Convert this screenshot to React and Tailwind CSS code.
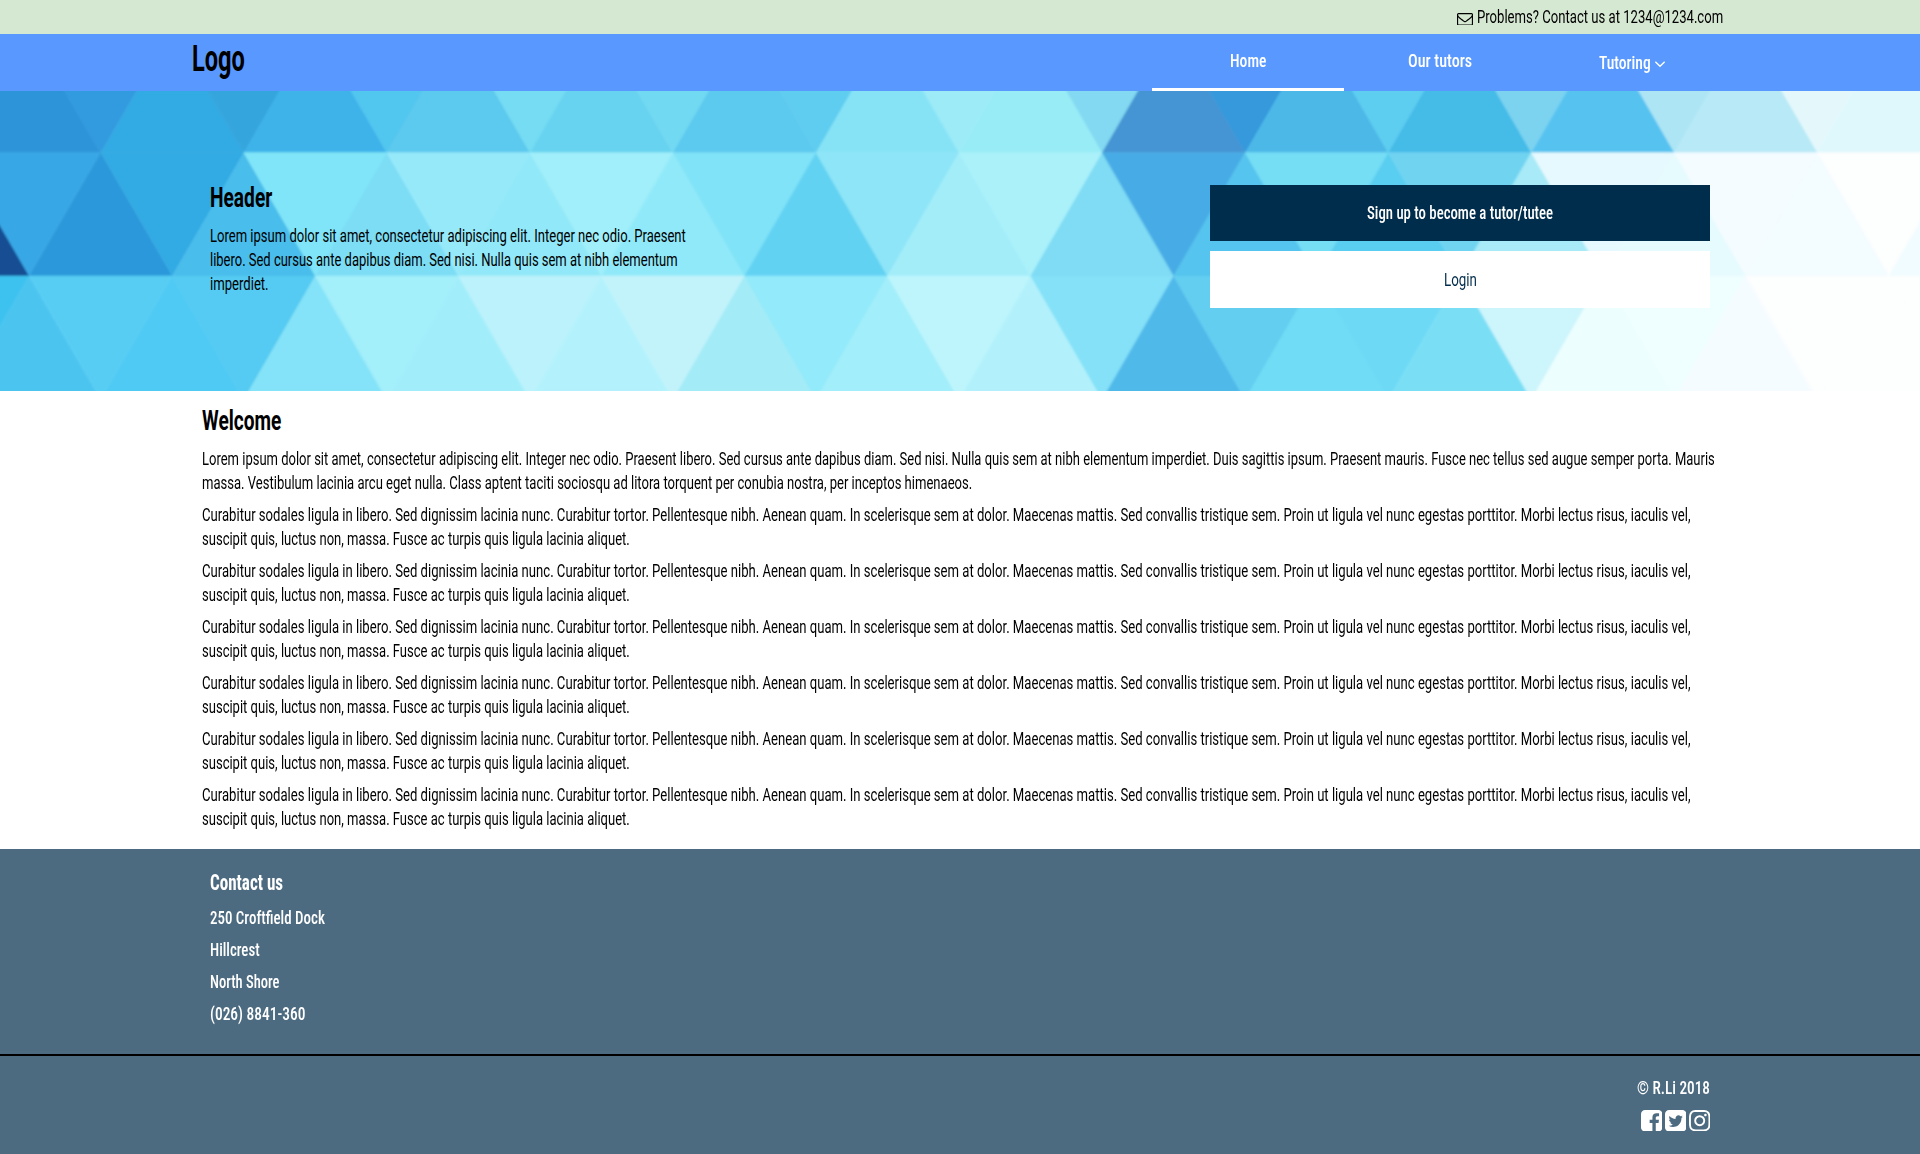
import { useLayoutEffect, useRef, useState } from "react";

// Text set condensed: a single line squeezed horizontally to the given width.
function Fit({ w, dy = 0, className = "", children }) {
  const ref = useRef(null);
  const [k, setK] = useState(0.7);
  useLayoutEffect(() => {
    setK(w / ref.current.offsetWidth);
  }, [w, children]);
  return (
    <span className="block" style={{ width: w }}>
      <span
        ref={ref}
        className={"inline-block origin-left whitespace-nowrap align-top " + className}
        style={{ transform: `translateY(${dy}px) scaleX(${k})` }}
      >
        {children}
      </span>
    </span>
  );
}

const BODY = "text-[18.6px] leading-6";
const STRONG = "text-[18.6px] font-medium leading-6 [font-stretch:75%]";

const ROW_A = [
  "#2f94d9", "#309adf", "#33aae3", "#35a5dd", "#3cb3ea", "#51c6ef", "#5cc9ee", "#74dcf3", "#68d3f0",
  "#72d9f2", "#5bc9ef", "#5fcdf0", "#86e3f6", "#9cebf7", "#98ecf6", "#82d9f1", "#4494d3", "#3499dc",
  "#4bb8e8", "#5dcef0", "#44bbe8", "#7bd3f0", "#57c2f0", "#ade5f5", "#b8e9f6", "#e4f8fc", "#dff8fc",
];
const ROW_B = [
  "#134e93", "#37a7e6", "#2c98da", "#33aae3", "#49bdeb", "#80e5f9", "#7bddf5", "#96e9f9", "#91e8f8",
  "#a0effa", "#90e9f9", "#80e3f7", "#62d2f3", "#8de5f7", "#a3edf9", "#aaf1fa", "#7fdcf4", "#47ace5",
  "#54c4ee", "#74def5", "#5acef0", "#70d4f1", "#a8eaf7", "#e6f9fe", "#e6fbfe", "#f4fcff", "#f3fcff",
  "#fdfefe", "#f0fcff",
];
const ROW_C = [
  "#3cc2f0", "#4bc4f0", "#58cdf3", "#4fcaf4", "#55caf2", "#84e3f8", "#a3effa", "#a1eefa", "#bcf2fb",
  "#b3f2fc", "#c2f3fa", "#a3ebf7", "#92eafa", "#a2eefa", "#bef5fc", "#b2f1fb", "#84e1f8", "#50b9ea",
  "#63cef0", "#70dcf5", "#6dd9f5", "#7adff5", "#cdf5fc", "#ecfefe", "#effeff", "#f5fcff", "#fdfefe",
  "#fdfefe", "#fdfefe",
];

const HALF = 71.53;

// One strip of alternating triangles; cx is the centre of the first one.
function Strip({ colors, cx, top, bottom, firstUp }) {
  return colors.map((c, i) => {
    const x = cx + i * HALF;
    const up = firstUp ? i % 2 === 0 : i % 2 === 1;
    const [apex, base] = up ? [top, bottom] : [bottom, top];
    return (
      <polygon
        key={i}
        points={`${x},${apex} ${x - HALF},${base} ${x + HALF},${base}`}
        fill={c}
        stroke={c}
        strokeWidth="0.6"
      />
    );
  });
}

function HeroPattern() {
  return (
    <svg className="absolute inset-0 h-full w-full" viewBox="0 0 1920 300" preserveAspectRatio="none">
      <filter id="soft" x="-5%" y="-20%" width="110%" height="140%">
        <feGaussianBlur stdDeviation="0.8" />
      </filter>
      <rect width="1920" height="300" fill="#fdfefe" />
      <g filter="url(#soft)">
        <Strip colors={ROW_A} cx={29.4} top={-61.6} bottom={61.7} firstUp />
        <Strip colors={ROW_B} cx={-42.2} top={61.7} bottom={185} firstUp />
        <Strip colors={ROW_C} cx={-42.2} top={185} bottom={308.6} firstUp={false} />
      </g>
    </svg>
  );
}

function Glyph({ d, box, className }) {
  return (
    <svg viewBox={box} className={className} fill="currentColor">
      <path d={d} />
    </svg>
  );
}

const ENVELOPE =
  "M1664 1504v-768q-32 36-69 66-268 206-426 338-51 43-83 67t-86.500 48.500-102.500 24.500h-2q-48 0-102.500-24.500t-86.500-48.500-83-67q-158-132-426-338-37-30-69-66v768q0 13 9.500 22.500t22.500 9.500h1472q13 0 22.500-9.500t9.500-22.500zm0-1051v-24.500l-.5-13-3-12.500-5.500-9-9-7.500-14-2.500h-1472q-13 0-22.500 9.500t-9.500 22.500q0 168 147 284 193 152 401 317 6 5 35 29.500t46 37.500 44.500 31.500 50.500 27.500 43 9h2q20 0 43-9t50.500-27.500 44.500-31.500 46-37.500 35-29.500q208-165 401-317 54-43 100.500-115.500t46.500-131.500zm128-37v1088q0 66-47 113t-113 47h-1472q-66 0-113-47t-47-113v-1088q0-66 47-113t113-47h1472q66 0 113 47t47 113z";
const ANGLE =
  "M1395 736q0 13-10 23l-466 466q-10 10-23 10t-23-10l-466-466q-10-10-10-23t10-23l50-50q10-10 23-10t23 10l393 393 393-393q10-10 23-10t23 10l50 50q10 10 10 23z";
const FACEBOOK =
  "M1376 128q119 0 203.500 84.500t84.500 203.500v960q0 119-84.500 203.500t-203.500 84.500h-188v-595h199l30-232h-229v-148q0-56 23.500-84t91.500-28l122-1v-207q-63-9-178-9-136 0-217.500 80t-81.500 226v171h-200v232h200v595h-532q-119 0-203.500-84.500t-84.500-203.500v-960q0-119 84.500-203.500t203.500-84.500h960z";
const TWITTER =
  "M1408 610q-56 25-121 34 68-40 93-117-65 38-134 51-61-66-153-66-87 0-148.500 61.500t-61.500 148.500q0 29 5 48-129-7-242-65t-192-155q-29 50-29 106 0 114 91 175-47-1-100-26v1q0 75 50 133.500t123 76.500q-29 8-51 8-13 0-39-4 21 63 74.500 104t121.500 42q-116 90-261 90-26 0-50-3 148 94 322 94 112 0 210-35.500t168-95 120.500-137 75-162 24.500-168.500q0-18-1-27 63-45 105-109zM1664 416v960q0 119-84.500 203.500t-203.500 84.500h-960q-119 0-203.500-84.500t-84.500-203.500v-960q0-119 84.500-203.500t203.500-84.500h960q119 0 203.500 84.500t84.500 203.500z";
const INSTAGRAM =
  "M1152 896q0-106-75-181t-181-75-181 75-75 181 75 181 181 75 181-75 75-181zm138 0q0 164-115 279t-279 115-279-115-115-279 115-279 279-115 279 115 115 279zm108-410q0 38-27 65t-65 27-65-27-27-65 27-65 65-27 65 27 27 65zm-502-220q-7 0-76.500-.5t-105.500 0-96.500 3-103 10-71.500 18.500q-50 20-88 58t-58 88q-11 29-18.500 71.500t-10 103-3 96.500 0 105.500.5 76.500-.5 76.500 0 105.500 3 96.500 10 103 18.500 71.500q20 50 58 88t88 58q29 11 71.500 18.500t103 10 96.500 3 105.500 0 76.500-.5 76.500.5 105.500 0 96.500-3 103-10 71.500-18.500q50-20 88-58t58-88q11-29 18.500-71.500t10-103 3-96.500 0-105.500-.5-76.500.5-76.500 0-105.500-3-96.500-10-103-18.500-71.500q-20-50-58-88t-88-58q-29-11-71.500-18.500t-103-10-96.500-3-105.500 0-76.500.5zm768 630q0 229-5 317-10 208-124 322t-322 124q-88 5-317 5t-317-5q-208-10-322-124t-124-322q-5-88-5-317t5-317q10-208 124-322t322-124q88-5 317-5t317 5q208 10 322 124t124 322q5 88 5 317z";

const REPEATS = [1, 2, 3, 4, 5, 6];

export default function App() {
  return (
    <div className="flex h-[1154px] flex-col overflow-hidden bg-white font-[Roboto,sans-serif] text-black">
      <div className="flex h-[34px] shrink-0 items-center justify-end bg-[#d5e8d2] pr-[197.5px]">
        <Glyph d={ENVELOPE} box="0 256 1792 1408" className="mr-[4px] mt-[4px] h-[12.6px] w-4" />
        <Fit w={246} className={BODY}>Problems? Contact us at 1234@1234.com</Fit>
      </div>

      <nav className="flex h-[57px] shrink-0 justify-between bg-[#5999ff] px-48">
        <Fit w={53} dy={1} className="text-[36.5px] font-bold leading-[48px]">Logo</Fit>
        <div className="flex text-white">
          <div className="flex w-48 justify-center border-b-[3px] border-white pt-[15px]">
            <Fit w={36} className={STRONG}>Home</Fit>
          </div>
          <div className="flex w-48 justify-center pt-[15px]">
            <Fit w={64} className={STRONG}>Our tutors</Fit>
          </div>
          <div className="flex w-48 justify-center pt-[17px]">
            <Fit w={52} className={STRONG}>Tutoring</Fit>
            <Glyph d={ANGLE} box="397 653 998 582" className="ml-1 mt-[10px] h-[6.5px] w-[10px]" />
          </div>
        </div>
      </nav>

      <header className="relative h-[300px] shrink-0 overflow-hidden">
        <HeroPattern />
        <div className="relative flex justify-between pl-[210px] pr-[210px] pt-[94px]">
          <div className="-mt-[6px]">
            <h1><Fit w={62} dy={1} className="text-[27.5px] font-bold leading-9">Header</Fit></h1>
            <p className="mt-[8px]">
              <Fit w={476} className={BODY} dy={1}>Lorem ipsum dolor sit amet, consectetur adipiscing elit. Integer nec odio. Praesent</Fit>
              <Fit w={467.5} className={BODY} dy={1}>libero. Sed cursus ante dapibus diam. Sed nisi. Nulla quis sem at nibh elementum</Fit>
              <Fit w={58.5} className={BODY} dy={1}>imperdiet.</Fit>
            </p>
          </div>
          <div className="flex w-[500px] flex-col gap-[10px]">
            <button className="flex h-14 items-center justify-center bg-[#002d4b] text-white">
              <Fit w={186} className={STRONG}>Sign up to become a tutor/tutee</Fit>
            </button>
            <button className="flex h-[57px] items-center justify-center bg-white text-[#002d4b]">
              <Fit w={33} className={BODY}>Login</Fit>
            </button>
          </div>
        </div>
      </header>

      <main className="h-[458px] shrink-0 pl-[202px] pt-[11px]">
        <h2><Fit w={79} dy={0.5} className="text-[27.5px] font-bold leading-9">Welcome</Fit></h2>
        <div className="mt-[9px] flex flex-col gap-2">
          <p>
            <Fit w={1512.5} className={BODY}>Lorem ipsum dolor sit amet, consectetur adipiscing elit. Integer nec odio. Praesent libero. Sed cursus ante dapibus diam. Sed nisi. Nulla quis sem at nibh elementum imperdiet. Duis sagittis ipsum. Praesent mauris. Fusce nec tellus sed augue semper porta. Mauris</Fit>
            <Fit w={770.5} className={BODY}>massa. Vestibulum lacinia arcu eget nulla. Class aptent taciti sociosqu ad litora torquent per conubia nostra, per inceptos himenaeos.</Fit>
          </p>
          {REPEATS.map((n) => (
            <p key={n}>
              <Fit w={1488.5} className={BODY}>Curabitur sodales ligula in libero. Sed dignissim lacinia nunc. Curabitur tortor. Pellentesque nibh. Aenean quam. In scelerisque sem at dolor. Maecenas mattis. Sed convallis tristique sem. Proin ut ligula vel nunc egestas porttitor. Morbi lectus risus, iaculis vel,</Fit>
              <Fit w={427.5} className={BODY}>suscipit quis, luctus non, massa. Fusce ac turpis quis ligula lacinia aliquet.</Fit>
            </p>
          ))}
        </div>
      </main>

      <footer className="flex flex-1 flex-col bg-[#4d6b80] text-white">
        <div className="h-[207px] border-b-2 border-black pl-[210px] pt-[20px]">
          <h3><Fit w={73} className="text-[21.5px] font-bold leading-7 [font-stretch:75%]">Contact us</Fit></h3>
          <div className="mt-[9px] flex flex-col gap-2">
            <Fit w={115} className={STRONG}>250 Croftfield Dock</Fit>
            <Fit w={49.5} className={STRONG}>Hillcrest</Fit>
            <Fit w={69.5} className={STRONG}>North Shore</Fit>
            <Fit w={95.5} className={STRONG}>(026) 8841-360</Fit>
          </div>
        </div>
        <div className="flex flex-col items-end pr-[210px] pt-[20px]">
          <Fit w={73} className={STRONG}>© R.Li 2018</Fit>
          <div className="mt-[10px] flex gap-[2.6px]">
            <Glyph d={FACEBOOK} box="128 128 1536 1536" className="size-[21.4px]" />
            <Glyph d={TWITTER} box="128 128 1536 1536" className="size-[21.4px]" />
            <Glyph d={INSTAGRAM} box="128 128 1536 1536" className="size-[21.4px]" />
          </div>
        </div>
      </footer>
    </div>
  );
}
